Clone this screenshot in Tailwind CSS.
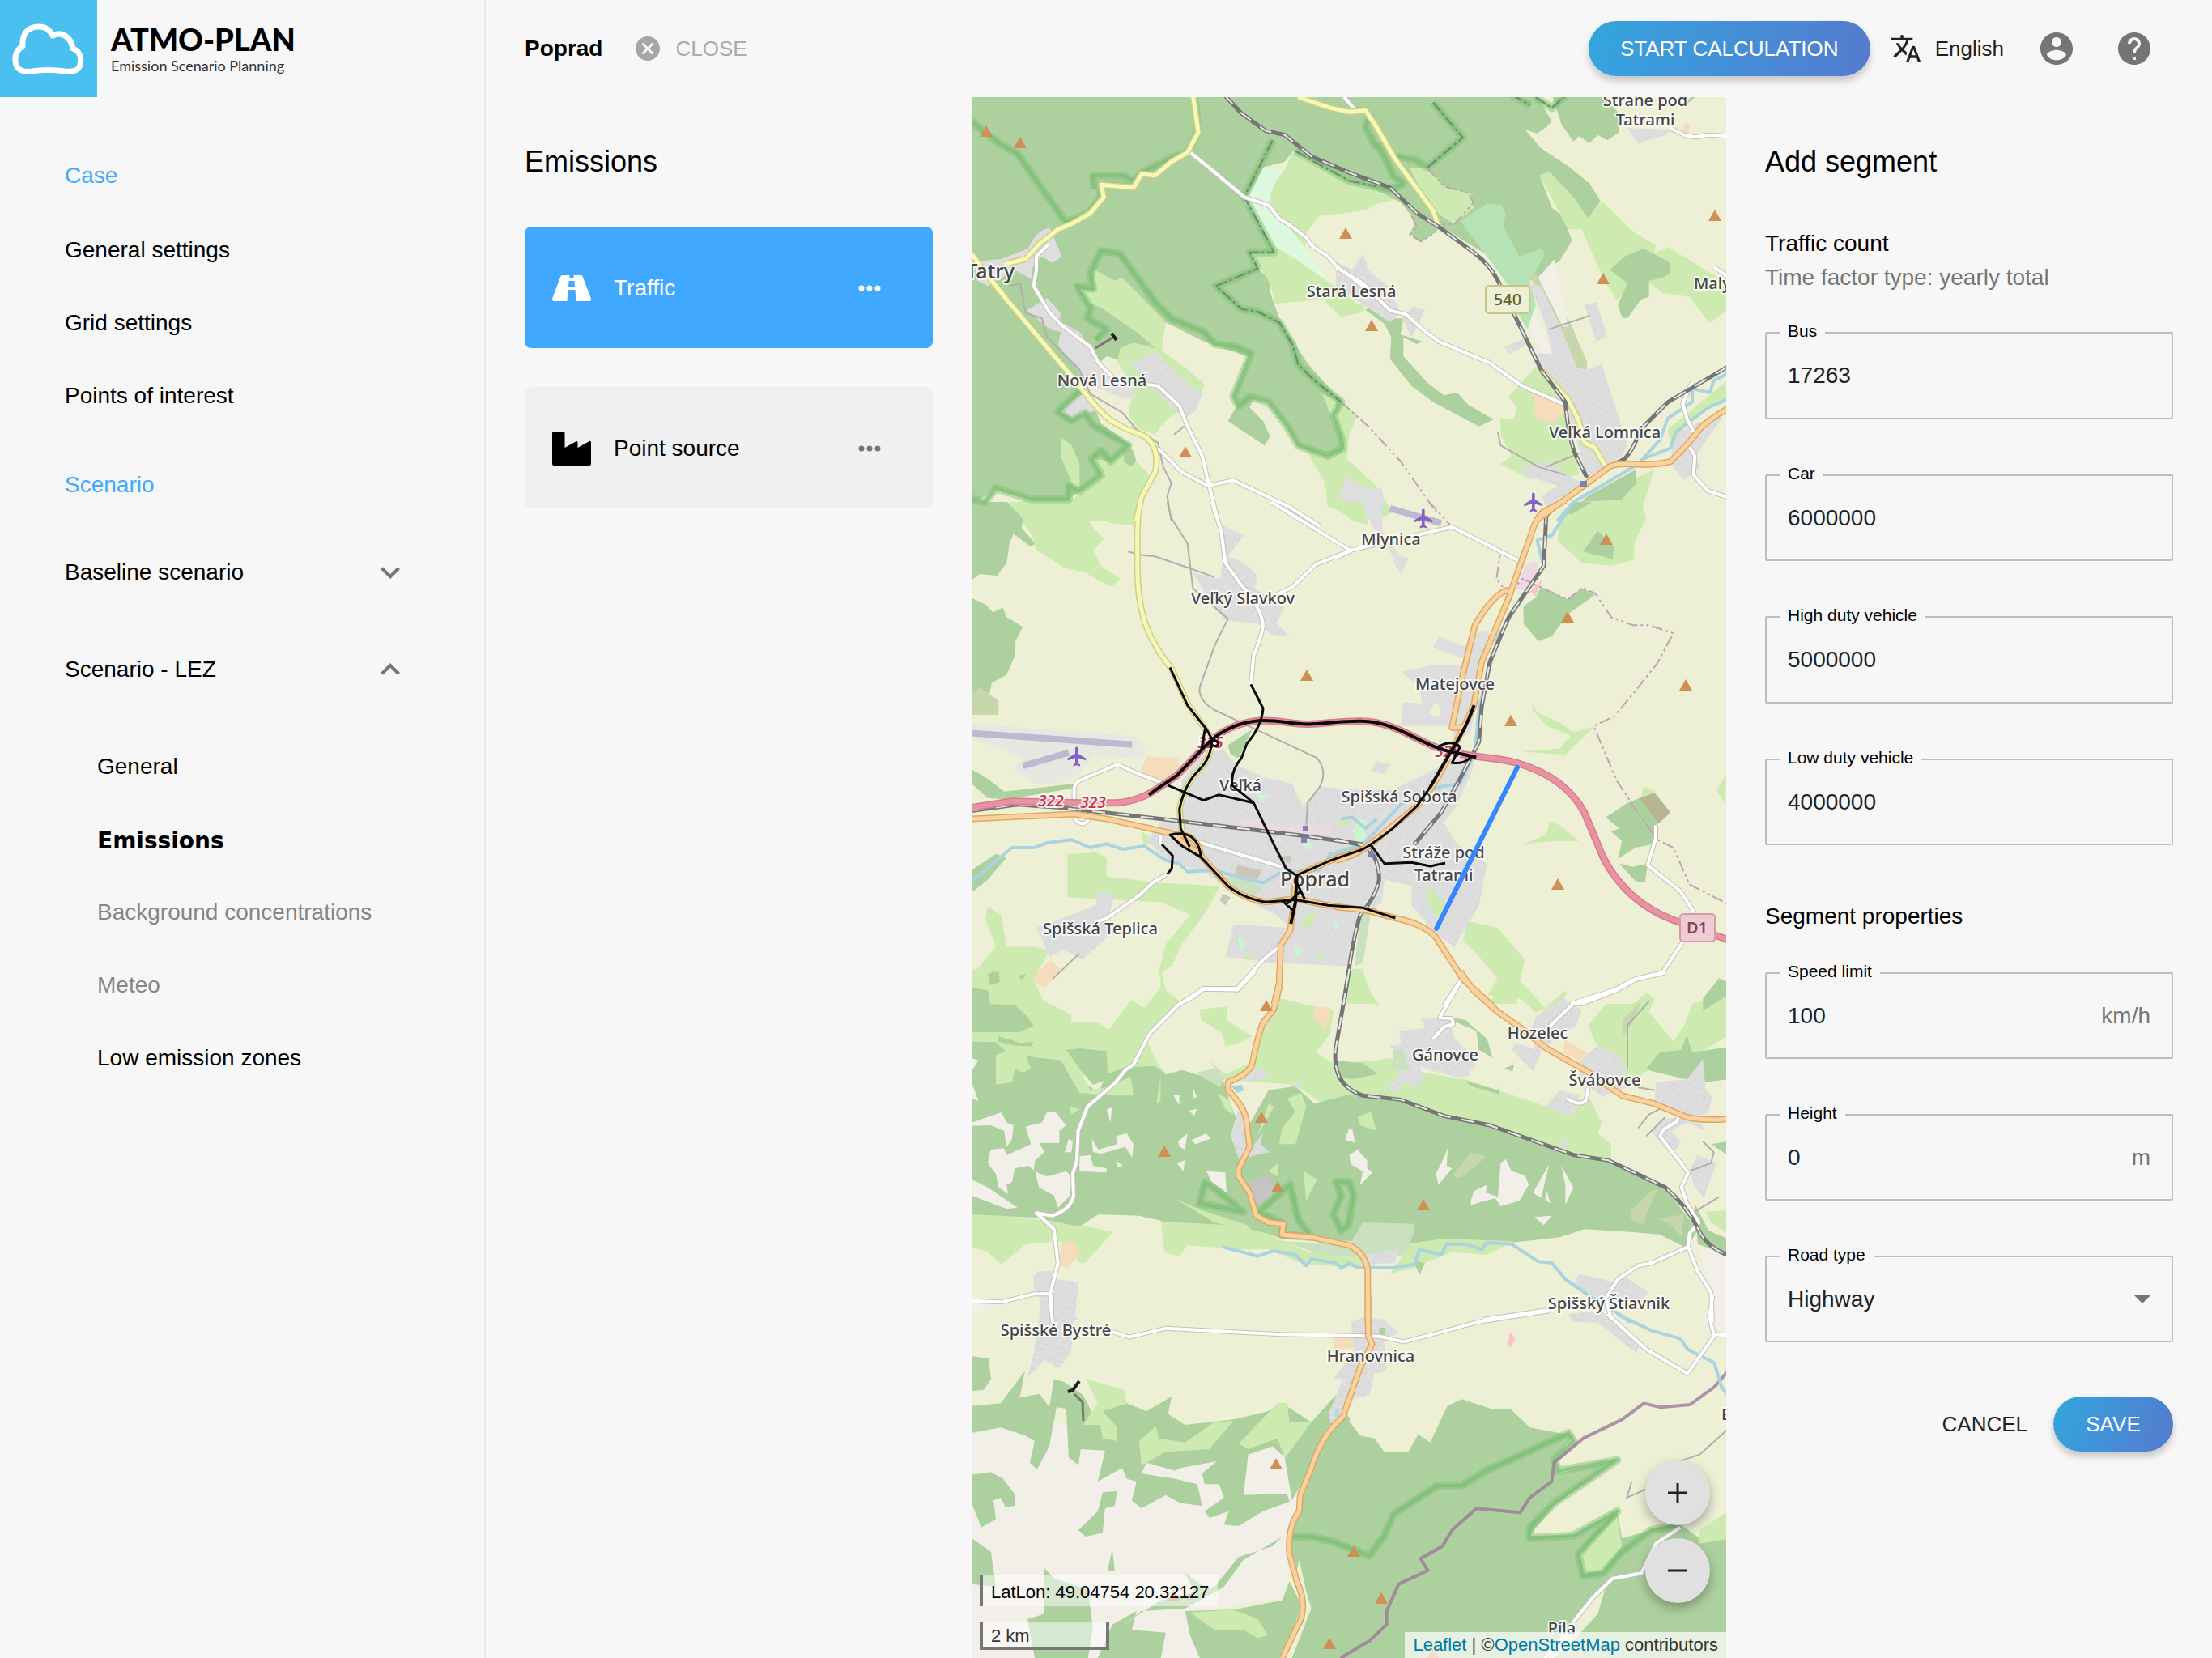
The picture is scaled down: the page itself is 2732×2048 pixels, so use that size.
<!DOCTYPE html>
<html lang="en">
<head>
<meta charset="utf-8">
<title>ATMO-PLAN – Add segment</title>
<meta name="viewport" content="width=device-width, initial-scale=1">
<script src="https://cdn.jsdelivr.net/npm/@tailwindcss/browser@4"></script>
</head>
<body class="grid min-h-screen grid-cols-[600px_600px_minmax(0,1fr)_600px] grid-rows-[120px_1fr] bg-[#f7f7f7] font-['Liberation_Sans',Arial,sans-serif] text-[28px] leading-[32px] text-black">

<!-- Sidebar -->
<aside class="row-span-2 border-r-2 border-[#e8e8e8]">
  <a href="#" class="flex h-[120px] items-center gap-[17px]">
    <svg class="size-[120px] shrink-0 bg-[#49c0f0]" viewBox="0 0 120 120" aria-hidden="true">
      <path d="M28 57C27 42 34 33 48 33C57 33 62 38 65 44C76 38 88 46 90 60C99 63 101 72 99 80C97 88 88 89 80 88C68 86 50 86 40 88C28 90 20 86 19 76C18 66 23 60 28 57Z" fill="none" stroke="#fff" stroke-width="7" stroke-linejoin="round"/>
    </svg>
    <span class="flex flex-col pt-[4px] font-['Lato',sans-serif]">
      <span class="text-[38px] font-black leading-[38px]">ATMO-PLAN</span>
      <span class="text-[18px] leading-[28px] text-[#333]">Emission Scenario Planning</span>
    </span>
  </a>
  <nav class="flex flex-col pt-[50px] pr-[92px] pl-[80px]">
    <h2 class="flex h-[94px] items-center text-[#40a9ff]">Case</h2>
    <a href="#" class="flex h-[90px] items-center">General settings</a>
    <a href="#" class="flex h-[90px] items-center">Grid settings</a>
    <a href="#" class="flex h-[90px] items-center">Points of interest</a>
    <h2 class="mt-[17px] flex h-[96px] items-center text-[#40a9ff]">Scenario</h2>
    <button type="button" class="flex h-[120px] items-center justify-between">Baseline scenario
      <svg class="size-[48px] fill-[#757575]" viewBox="0 0 24 24"><path d="M16.59 8.59 12 13.17 7.41 8.59 6 10l6 6 6-6z"/></svg>
    </button>
    <button type="button" class="flex h-[120px] items-center justify-between">Scenario - LEZ
      <svg class="size-[48px] fill-[#757575]" viewBox="0 0 24 24"><path d="m12 8-6 6 1.41 1.41L12 10.83l4.59 4.58L18 14z"/></svg>
    </button>
    <div class="mt-[15px] flex flex-col pl-[40px]">
      <a href="#" class="flex h-[90px] items-center">General</a>
      <a href="#" class="flex h-[90px] items-center pt-[4px] font-['DejaVu_Sans',sans-serif] font-bold">Emissions</a>
      <a href="#" class="flex h-[90px] items-center whitespace-nowrap text-[#868686]">Background concentrations</a>
      <a href="#" class="flex h-[90px] items-center text-[#868686]">Meteo</a>
      <a href="#" class="flex h-[90px] items-center">Low emission zones</a>
    </div>
  </nav>
</aside>

<!-- Top bar -->
<header class="col-span-3 flex items-center pr-[72px] pl-[48px]">
  <h1 class="font-bold">Poprad</h1>
  <button type="button" class="ml-[38px] flex items-center gap-[16px] text-[26px] text-[#ababab]">
    <svg class="size-[36px] fill-[#a6a6a6]" viewBox="0 0 24 24"><path d="M12 2C6.47 2 2 6.47 2 12s4.47 10 10 10 10-4.47 10-10S17.53 2 12 2zm5 13.59L15.59 17 12 13.41 8.41 17 7 15.59 10.59 12 7 8.41 8.41 7 12 10.59 15.59 7 17 8.41 13.41 12 17 15.59z"/></svg>
    CLOSE
  </button>
  <button type="button" class="ml-auto h-[68px] w-[348px] rounded-full bg-linear-[100deg] from-[#33a6de] to-[#557ace] text-[26px] whitespace-nowrap text-white shadow-[0_6px_10px_rgba(0,0,0,0.2)]">START CALCULATION</button>
  <button type="button" class="ml-[24px] flex items-center gap-[16px] text-[26px] text-[#212121]">
    <svg class="size-[40px] fill-[#212121]" viewBox="0 0 24 24"><path d="m12.87 15.07-2.54-2.51.03-.03A17.52 17.52 0 0 0 14.07 6H17V4h-7V2H8v2H1v2h11.17C11.5 7.92 10.44 9.75 9 11.35 8.07 10.32 7.3 9.19 6.69 8h-2c.73 1.63 1.73 3.17 2.98 4.56l-5.09 5.02L4 19l5-5 3.11 3.11.76-2.04zM18.5 10h-2L12 22h2l1.12-3h4.75L21 22h2l-4.5-12zm-2.62 7 1.62-4.33L19.12 17h-3.24z"/></svg>
    English
  </button>
  <button type="button" aria-label="Account" class="ml-[41px]"><svg class="size-[48px] fill-[#757575]" viewBox="0 0 24 24"><path d="M12 2C6.48 2 2 6.48 2 12s4.48 10 10 10 10-4.48 10-10S17.52 2 12 2zm0 3c1.66 0 3 1.34 3 3s-1.34 3-3 3-3-1.34-3-3 1.34-3 3-3zm0 14.2a7.2 7.2 0 0 1-6-3.22c.03-1.99 4-3.08 6-3.08 1.99 0 5.97 1.09 6 3.08a7.2 7.2 0 0 1-6 3.22z"/></svg></button>
  <button type="button" aria-label="Help" class="ml-[48px]"><svg class="size-[48px] fill-[#757575]" viewBox="0 0 24 24"><path d="M12 2C6.48 2 2 6.48 2 12s4.48 10 10 10 10-4.48 10-10S17.52 2 12 2zm1 17h-2v-2h2v2zm2.07-7.75-.9.92C13.45 12.9 13 13.5 13 15h-2v-.5c0-1.1.45-2.1 1.17-2.83l1.24-1.26c.37-.36.59-.86.59-1.41 0-1.1-.9-2-2-2s-2 .9-2 2H8c0-2.21 1.79-4 4-4s4 1.79 4 4c0 .88-.36 1.68-.93 2.25z"/></svg></button>
</header>

<!-- Emission categories -->
<section class="px-[48px] pt-[60px]">
  <h2 class="text-[36px] leading-[40px]">Emissions</h2>
  <ul class="mt-[60px] flex flex-col gap-[48px]">
    <li class="flex h-[150px] items-center rounded-[8px] bg-[#40a9ff] pt-[2px] pr-[60px] pl-[34px] text-white">
      <svg class="h-[32px] w-[48px] fill-white" viewBox="0 0 48 32"><path d="M13 0H35C36.500 0 37.300.6 37.800 2L47.800 28.500C48.400 30.500 47.500 32 45.500 32H2.500C.5 32-.4 30.500.2 28.500L10.200 2C10.700.6 11.500 0 13 0Z"/><path d="M21.500 0H26.500L26.800 4H21.200ZM20.600 7H27.400L28 14H20ZM19.600 18H28.400L29.600 32H18.400Z" fill="#40a9ff"/></svg>
      <a href="#" class="ml-[28px] grow">Traffic</a>
      <button type="button" aria-label="Traffic options"><svg class="size-[36px] fill-white" viewBox="0 0 36 36"><circle cx="8" cy="18" r="3.500"/><circle cx="18" cy="18" r="3.500"/><circle cx="28" cy="18" r="3.500"/></svg></button>
    </li>
    <li class="flex h-[150px] items-center rounded-[8px] bg-[#f0f0f0] pt-[2px] pr-[60px] pl-[34px]">
      <svg class="h-[42px] w-[48px]" viewBox="0 0 48 42"><path d="M2 0H13.500a2 2 0 0 1 2 2V20L29.500 12.200a1.500 1.500 0 0 1 2 1.300V20L45.500 12.200a1.500 1.500 0 0 1 2.500 1.300V40a2 2 0 0 1-2 2H2a2 2 0 0 1-2-2V2A2 2 0 0 1 2 0z"/></svg>
      <a href="#" class="ml-[28px] grow">Point source</a>
      <button type="button" aria-label="Point source options"><svg class="size-[36px] fill-[#757575]" viewBox="0 0 36 36"><circle cx="8" cy="18" r="3.500"/><circle cx="18" cy="18" r="3.500"/><circle cx="28" cy="18" r="3.500"/></svg></button>
    </li>
  </ul>
</section>

<!-- Map -->
<main class="relative overflow-hidden bg-[#edf0d5]">
<svg class="absolute inset-0 size-full [&_path]:[vector-effect:non-scaling-stroke]" viewBox="1200 120 932 1928" preserveAspectRatio="xMidYMid slice" role="img" aria-label="Map of Poprad and surroundings">
<defs>
  <pattern id="streets" width="46" height="46" patternUnits="userSpaceOnUse" patternTransform="rotate(24)"><rect width="46" height="46" fill="#dedede"/><path d="M0 10H46M14 0V46M30 10V46M14 30H46" stroke="#cbcbcb" stroke-width="1" fill="none"/></pattern>
  <path id="peak" d="M0-7L8 7H-8Z" fill="#d08f55"/>
  <path id="plane" d="M21 16v-2l-8-5V3.500c0-.83-.67-1.500-1.500-1.500S10 2.670 10 3.500V9l-8 5v2l8-2.500V19l-2 1.500V22l3.500-1 3.500 1v-1.500L13 19v-5.500l8 2.500z" fill="#8461c4"/>
  <g id="white-roads" fill="none">
    <g transform="translate(1200 120) scale(.33333)"><path d="M810 205L860 245 980 345 1010 370 1100 400 1140 450 1180 475 1240 520 1260 550 1320 590 1350 625 1450 700"/><path d="M285 545L240 590V640L230 700 290 800 340 850 440 925 470 985 520 1035M650 1065L690 1070 770 1145 800 1220 855 1330 880 1440 910 1560"/><path d="M690 1300L780 1390 875 1440 970 1420 1180 1520 1290 1590M1380 0L1420 45"/></g>
    <g transform="translate(1650 120) scale(.33333)"><path d="M0 630L100 690 150 740 200 790 260 805 320 860 380 905 570 985 690 1070 850 1140"/><path d="M1240 115L1290 140 1330 148 1380 140 1460 145M1320 1055L1300 1100 1285 1135 1300 1190 1325 1240M1310 1295L1330 1330 1325 1400 1380 1460 1460 1485M1400 630L1460 670"/></g>
    <g transform="translate(1200 620) scale(.33333 .3954)"><path d="M890 0L925 90 940 190 1000 260Q1080 340 1080 390 1070 430 1045 480L1035 570M1110 0L1400 150M1130 290L1190 265 1275 195 1410 150"/><path d="M700 1040V1070M720 1165L670 1190 620 1230 500 1300 470 1310M730 885L620 850 540 820 400 870Q380 880 380 900V980Q385 1005 415 1005 430 1000 440 985M830 1060L1150 1140M1140 1390L1080 1430 985 1520 860 1520 770 1570"/></g>
    <g transform="translate(1650 620) scale(.33333 .3954)"><path d="M0 175L60 150 430 78 680 185M465 1490L400 1575M1185 1010V1050L1155 1135 1275 1215 1330 1285M1285 1375L1210 1470 1110 1490 1030 1525 870 1568"/></g>
    <g transform="translate(1200 1200) scale(.33333)"><path d="M1050 0L985 68 860 65 820 95 770 120 660 230 600 345 570 365 530 415 430 500 395 590 390 700 375 750 378 830Q370 880 300 905L240 895 305 955 320 1080 290 1200 300 1300M0 1220L110 1225 230 1195H290"/></g>
    <g transform="translate(1650 1200) scale(.33333)"><path d="M465 30L385 170 430 175 435 195 400 205 360 250M1220 5L1110 30 1040 70 910 120 880 118 790 205M855 470Q900 500 925 480L935 430M1270 535L1265 555 1215 585 1200 610 1305 745 1280 800 1300 860 1345 930 1310 970 1305 1020 1340 1110 1390 1190 1395 1300M1305 1020L1170 1080 1120 1090 1045 1140 1000 1210 1020 1290M545 1290L780 1255"/></g>
    <g transform="translate(1200 1600) scale(.5995 .33333)"><path d="M290 135L325 155 400 122 480 130 640 145 800 150 840 152 890 172 960 140 1040 100 1190 58M1310 70L1390 200 1475 290 1530 150 1520 80 1527 0M1530 145L1560 148M165 0V80M1460 860L1410 920 1380 1030 1320 1050 1280 1120 1240 1210M1210 1300L1180 1344"/></g>
  </g>
  <g id="yellow-roads" fill="none">
    <g transform="translate(1200 120) scale(.33333)"><path d="M0 580L50 650 130 750 400 1070Q460 1150 500 1185T640 1255Q700 1300 680 1390L630 1480 610 1570M1210 0L1330 40 1400 55 1460 50 1500 110 1570 230 1710 420 1730 480"/><path d="M820-10L840 130 800 205 740 240 680 290 630 285 600 335 480 325 490 370 440 430 370 470 320 490 250 545 200 600 120 620"/></g>
    <g transform="translate(1650 120) scale(.33333)"><path d="M760 1010L860 1120 900 1200 920 1280 960 1300 1000 1370"/></g>
    <g transform="translate(1200 620) scale(.33333 .3954)"><path d="M625 0Q610 60 615 170 610 290 640 370 665 440 740 520L800 630 890 740Q890 800 840 840T770 960L780 1030 810 1080"/></g>
  </g>
  <g id="orange-roads" fill="none">
    <g transform="translate(1650 120) scale(.33333)"><path d="M1460 1150Q1370 1200 1340 1240T1240 1350Q1180 1365 1100 1360T1000 1380L740 1570"/></g>
    <g transform="translate(1650 620) scale(.33333 .3954)"><path d="M850-5L770 30Q740 50 720 110L690 180 640 300 540 500 510 640 440 760Q360 900 300 950L120 1075Q60 1110 0 1120M640 275Q590 280 515 385L470 540 430 705H480"/><path d="M0 1265L110 1275 220 1300Q330 1320 370 1360L470 1490 580 1575"/></g>
    <g transform="translate(1200 620) scale(.33333 .3954)"><path d="M0 990L380 975 500 990 740 1035 850 1105 950 1200Q1010 1240 1090 1250L1200 1240 1320 1260 1500 1280M740 1040Q840 1030 850 1105"/><path d="M1200 1170L1195 1250 1180 1340 1145 1385 1140 1500 1120 1570M1210 1165L1330 1120 1450 1085 1500 1055"/></g>
    <g transform="translate(1200 1200) scale(.33333)"><path d="M1140 0V60L1120 140 1080 190Q1060 240 1040 340 1030 380 950 410V440Q1020 510 1020 570L1030 650 990 730V760L1030 820 1055 905 1100 930 1155 935 1150 975 1260 985 1400 1015Q1460 1045 1468 1110V1300"/></g>
    <g transform="translate(1650 1200) scale(.33333)"><path d="M460 0L510 70 600 150 700 220 780 285 930 370 1060 460 1180 490 1300 540Q1370 555 1460 545"/></g>
    <g transform="translate(1200 1600) scale(.5995 .33333)"><path d="M817 0V150L825 180 800 270 765 450Q720 520 700 640L677 740 675 800Q650 860 655 960L670 1060Q695 1160 670 1230L640 1344"/></g>
  </g>
  <g id="motorway" fill="none">
    <g transform="translate(1200 620) scale(.33333 .3954)"><path d="M0 955L150 935 400 940H540Q620 935 690 895L760 855 880 750Q960 690 1070 683C1140 680 1190 696 1250 694S1400 682 1450 685C1580 690 1650 750 1750 775 1850 800 1930 795 2020 815Q2200 860 2270 970L2340 1110Q2430 1260 2630 1315L2810 1370"/></g>
  </g>
  <g id="railways" fill="none">
    <g transform="translate(1200 120) scale(.33333)"><path d="M935-10L1000 60 1090 125 1160 140 1260 220 1400 280 1550 335 1650 430 1730 480 1860 575Q1920 620 1950 680L2110 1010 2200 1130Q2210 1260 2240 1330L2280 1410"/><path d="M2800 1000L2580 1130 2480 1230Q2450 1310 2420 1340L2350 1375 2150 1530 2120 1560"/></g>
    <g transform="translate(1650 620) scale(.33333 .3954)"><path d="M780 30L770 200 640 360 570 500 540 640 530 750 450 880 390 970 290 1070M0 1055L110 1075Q160 1110 160 1180 150 1230 90 1290 60 1370 30 1568"/></g>
    <g transform="translate(1200 620) scale(.33333 .3954)"><path d="M0 965L170 945 330 955 700 990 1000 1020 1250 1045 1450 1070"/></g>
    <g transform="translate(1650 1200) scale(.33333)"><path d="M50-10L0 280Q-20 420 100 460L240 475 400 535 570 570 880 680 1010 700 1220 800Q1300 870 1340 950 1370 1020 1450 1050"/></g>
  </g>
  <g id="park-edges" fill="none">
    <g transform="translate(1200 120) scale(.33333)"><path d="M0 90L100 170 170 210 350 465M455 340L450 290 560 290 600 310 640 275 740 225 800 205 840 130 825 0M350 465L430 430 480 370 475 325 600 330"/><path d="M1115 160L1080 230 1010 370 1060 460 1120 575H1030L1060 635 905 700 1000 785 1060 795 1140 835 1190 920 1210 990 1270 1050 1370 1130 1340 1180 1370 1260 1375 1300 1320 1330 1210 1290 1170 1220 1100 1130 1030 1110 990 1145 970 1110 1035 950 980 925 900 915 860 870 740 820 680 760 550 580 480 570 440 650 450 710 390 700 440 780 430 820 500 860 460 900M400 1090L320 1165 370 1200 420 1170 450 1215 580 1290 515 1350 480 1310 445 1340 480 1400 400 1460 360 1440V1490H220L90 1450 50 1500 0 1490"/><path d="M1500 170L1540 240 1560 290 1600 320 1550 345 1400 310 1200 200M1480 60L1460 110 1500 190M1570 220L1640 230 1690 260 1820 150 1710 20M2000-10L2070 30M2090 0L2150 40 2200-5"/></g>
    <g transform="translate(1200 1200) scale(.33333)"><path d="M865 780L845 860 1005 890 920 820ZM1065 890L1180 790 1210 920 1260 985 1150 975 1155 935ZM1350 780H1400L1415 830 1395 940 1370 960 1340 900 1370 830Z"/></g>
    <g transform="translate(1200 1600) scale(.5995 .33333)"><path d="M650 895H700L740 910 820 965 850 890 870 810 960 705H1010L1060 650 1110 610 1230 510 1240 540 1200 610 1210 650 1330 610 1290 660 1200 770 1150 860V900L1240 890 1330 800 1300 860 1250 960 1260 1040 1300 1030 1340 950 1400 870 1460 850"/></g>
  </g>
</defs>

<!-- land cover -->
<g transform="translate(1200 120) scale(.33333)">
  <path fill="#add19e" d="M-20-20H2080L2110 20 2150 90 2130 110 2095 135 2050 120 2110 190 2210 255 2290 320 2330 385 2285 450 2220 380 2140 275 2105 290 2150 410 2190 440 2225 530 2180 605 2080 680 2000 640 1870 560 1740 480 1700 515 1665 535 1625 505 1645 460 1590 390 1500 345 1400 300 1190 200 1160 240 1080 260 1030 370 1120 570 1030 580 1060 640 1110 670 1105 720 1140 820 1240 980 1370 1130 1340 1180 1370 1260 1375 1310 1320 1335 1210 1290 1170 1220 1100 1130 1050 1110 1030 1150 1080 1200 1105 1260 1085 1290 950 1200 985 1140 970 1110 1035 965 860 905 720 840 680 930 640 960 600 990 500 960 400 1060 455 1150 480 1210 590 1290 515 1350 445 1340 480 1400 400 1460 360 1490H220L90 1450 0 1510Z"/>
  <path fill="#cdebb0" d="M455 640L530 680 560 670 720 835 705 930 860 1060 870 1090 840 1110 720 1200 680 1250 620 1230 580 1180 600 1080 540 980 550 930 600 910 680 930 610 870 480 780 430 760 400 710 450 720ZM1190 200L1240 240 1400 300 1570 380 1500 395 1460 420 1290 440 1240 500 1230 620 1330 690 1460 790 1370 815 1300 750 1125 765 1105 690 1040 580 1120 580 1080 430 1110 330 1160 270ZM590 1290L610 1350 660 1400 600 1570H130V1510L220 1490 360 1495 400 1470 490 1400 450 1340 520 1350ZM330 1260L370 1290 400 1360 400 1440 380 1450 330 1330ZM1300 1100L1370 1130 1430 1180 1400 1250 1390 1340 1500 1440 1560 1540 1500 1570 1320 1520 1310 1430 1240 1310 1340 1320 1370 1280Z"/>
  <path fill="#ddf9e0" d="M1080 260L1150 265 1110 350 1105 400 1240 560 1330 690 1200 600 1120 550 1010 390Z"/>
  <path fill="#edf0d5" d="M720 835L860 905 1015 970 970 1110 950 1200 1085 1290 870 1250 690 1220 760 1200 840 1110 870 1060 705 940Z"/>
  <path fill="#add19e" d="M560 1290L600 1310 610 1350 590 1370 565 1350ZM1030 1110L1000 1150 950 1200 1085 1290 1105 1255 1080 1200 1025 1160Z"/>
</g>
<g transform="translate(1650 120) scale(.33333)">
  <path fill="#add19e" d="M800-10H1340L1320 10 1300 25 1040 40 1050 130 1005 160 970 140 940 170 900 145 880 165 835 100Z"/>
  <path fill="#edf0d5" d="M980-10H1320L1300 20 1040 50Z"/>
  <path fill="#cdebb0" d="M270 260L340 262 400 330 500 360 510 410 440 470 390 440 340 390ZM755 290L790 275 880 370 935 450 985 385 1090 490 1185 550 1180 580 1230 555 1450 690V790L1385 838 1310 740 1210 725 1160 690 1040 750 1000 690 910 490 860 490ZM755 985L640 1110 670 1150 660 1190 610 1190V1250L650 1330 610 1360 720 1415 900 1400 860 1140ZM1450 1050L1330 1150 1230 1230 1240 1290 1330 1180 1450 1120ZM860 1570L960 1480 1180 1380 1120 1570ZM0 760L110 770 90 800 20 810Z"/>
  <path fill="#b5e3b5" d="M460 460L560 395 610 400 630 430 620 480 680 590 760 560 775 580 720 680 740 770 710 860 660 780 640 700 560 590Z"/>
  <path fill="#add19e" d="M1015 640L1070 590 1140 560 1240 615V650L1210 670 1160 680V740L1130 750 1080 820 1060 815 1045 770 1080 690ZM110 790L130 770 180 820 250 820 240 880 320 905 300 915 250 890 250 960 340 1060 400 1105 450 1095 490 1140 585 1195 530 1220 360 1130 280 1070 200 970 205 890 180 840ZM0 1100L20 1120 0 1150ZM0 1220L20 1250 25 1310 0 1325ZM860 1550L930 1480 1110 1380 1115 1430 1050 1500 1010 1500Z"/>
  <path fill="#c8d7ab" d="M715 655L750 660 820 770 870 840 930 980 935 1100 915 1090 860 960 840 880 770 770Z"/>
  <path fill="#f2efe9" d="M740 790L800 950 770 955 715 860ZM750 670L810 600 860 850 840 850Z"/>
  <path fill="#f5dcba" d="M730 1100L850 1145 845 1170 800 1210 740 1185ZM1290 100H1315L1305 135 1285 130Z"/>
  <path fill="url(#streets)" d="M920 770L965 760 1005 885 965 905ZM715 690L760 700 840 870 930 1100 870 1080 880 1000 930 1010 985 990 1080 1290 1060 1330 930 1410 870 1200 760 1010 740 950 800 950 780 850ZM625 925L700 895 720 910 640 955ZM245 820L285 775 330 790 280 890ZM0 610L60 640 100 580 120 640 190 700 240 800 200 835 0 700ZM1080 115L1240 120 1220 140 1120 170ZM690 1370L780 1350 910 1430 780 1520 760 1480 820 1440 700 1400ZM1250 1250L1400 1180 1430 1190 1330 1330 1350 1370 1290 1420 1240 1360Z"/>
  <path fill="#dedede" d="M10 1480L40 1405 110 1450 170 1450 180 1500 130 1570 110 1560 60 1520Z"/>
</g>
<g transform="translate(1200 120) scale(.33333)"><path fill="#dedede" d="M210 560Q240 490 290 485L335 590 300 615 260 590 220 640 230 680 160 640 60 700 20 680 10 610 110 600ZM205 790L280 745 330 800 325 830 400 870 440 930 500 1010 600 1080V1120L560 1115 430 1060 370 980 320 920 330 870 290 860ZM330 1170L360 1130 430 1090 460 1160 380 1190Z"/><path fill="url(#streets)" d="M590 990L680 945 780 1040 855 1100 830 1160 790 1195 750 1160 650 1060Z"/></g>

<g transform="translate(1200 620) scale(.33333 .3954)">
  <path fill="#cdebb0" d="M130 0L490 5 425 40 450 80 490 115 450 150 480 200 550 240 520 265 470 245 420 220 340 205 240 150 220 100 185 60ZM490 0H605V75L510 65ZM355 1100L460 1095 500 1110V1170L700 1190 920 1200 870 1280 780 1380 740 1450 690 1480 720 1380 810 1290 700 1250 355 1235ZM60 1265L110 1290 130 1390H230L290 1400 230 1490 270 1568H0V1480L40 1440 90 1390 50 1300ZM630 1030L680 1060 640 1080ZM1310 0H1370L1470 70 1420 60Z"/>
  <path fill="#add19e" d="M-10 0H130L190 50 185 80 235 130 220 140 155 100 140 130 130 190 95 230 30 225 0 245ZM0 300L50 320 80 345 115 330 130 360 190 390 160 440V480L130 540 75 565 60 620 0 600ZM0 835L60 865 120 905 380 880 370 895 130 930 60 925 0 880ZM0 1150L90 1100 130 1110 60 1180 0 1220ZM60 1480L80 1465 110 1490 90 1510ZM170 1480L200 1475 190 1495ZM0 1540L50 1560V1568H0Z"/>
  <path fill="#c8d7ab" d="M0 600L30 580 100 620V665H0Z"/>
  <path fill="#e9e7e2" d="M0 693L610 732 645 775 630 802 450 795 400 850 310 885 230 880 155 835 190 800 0 740Z"/>
  <path fill="#f5dcba" d="M625 845L650 795 765 800 770 850 720 875ZM290 1430L330 1460 280 1510 225 1490Z"/>
  <path fill="url(#streets)" d="M780 870L840 800 930 770 980 820 1080 860 1190 880 1200 910 1230 950 1290 890 1440 900 1560 900 1800 800 1870 790 1850 850 1790 960 1750 1000 1800 1070 1910 1130 1880 1260 1790 1390 1720 1350 1630 1260 1630 1200 1530 1180 1520 1250 1440 1300 1390 1450 1120 1440 940 1420 970 1320 1180 1330 1130 1290 1010 1240 850 1150 740 1130 650 1060 700 1000 770 990ZM820 220L920 240 930 190 920 70 1010 105 950 170 1010 190 1060 230 1050 270 1160 330 1130 380 1180 420 1110 415 1060 380 940 370 880 310ZM240 1330L460 1260 470 1215 530 1230 510 1290 530 1340 410 1430 340 1400 290 1420Z"/>
  <path fill="#add19e" d="M950 760L1040 710 990 800 960 790Z"/>
  <path fill="#c9e1bf" d="M910 1180L1000 1170 1080 1210 1050 1230 960 1200ZM1440 1290L1480 1280 1450 1440 1420 1450Z"/>
  <path fill="#c9c7b9" d="M985 1135L1075 1150 1060 1180 975 1165ZM930 1225L960 1235 940 1260 920 1245ZM1150 1105H1185L1180 1130 1155 1125Z"/>
  <path fill="#ecd9e6" d="M960 1000L1050 990 1150 1020 1230 1005 1340 1015 1330 1040 1150 1035Z"/>
  <path fill="#ccf4d2" d="M1410 1030L1440 985 1465 1000 1460 1050 1430 1065ZM1050 910L1100 915 1080 940ZM1230 1060L1270 1070 1240 1090ZM985 1360L1020 1370 1000 1410ZM1200 1380L1230 1400 1200 1425ZM1340 1310L1360 1320 1345 1345Z"/>
  <path fill="#cdebb0" d="M1250 1280L1280 1290 1240 1340 1220 1320ZM1010 1410L1040 1420 1020 1435ZM1270 1410L1310 1415 1290 1435ZM1350 1000L1410 990 1380 1015Z"/>
  <path fill="none" stroke="#bbbad0" stroke-width="8" d="M0 722L595 758M190 825L360 783"/>
</g>
<g transform="translate(1650 620) scale(.33333 .3954)">
  <path fill="#cdebb0" d="M890 0L1130-10 1150 50 1105 130V180L1020 200 910 190 820 120 830 60ZM725 630L750 660 830 690 880 720 960 700 850 790 690 780 830 770 870 730 780 700 730 650ZM690 1070L780 1040 790 1000 830 1010 900 1060 800 1060ZM1450 850L1410 900 1440 940ZM490 1310L600 1330 700 1430 680 1500 670 1568H570L610 1500 530 1420 470 1370ZM340 1200L410 1260 380 1310 340 1250ZM50 1470L100 1480 150 1568H40ZM0 0H100L120 70 60 60Z"/>
  <path fill="#add19e" d="M970 90L1030 140 1025 178 915 155ZM760 265L860 305 910 268 960 290 860 350 800 420 750 435 695 380V325L740 300ZM1140 920L1190 1000 1170 1070 1110 1080 1045 1115 1060 1060 1020 1030 1050 1020 1000 985 1080 940ZM1050 1130L1100 1140 1155 1130 1145 1188 1110 1185ZM850 30L880 0H950L870 40ZM1370 1540L1420 1488 1450 1500V1568H1360Z"/>
  <path fill="#b5b591" d="M1125 925L1180 908 1240 970 1195 1005Z"/>
  <path fill="#cdebb0" d="M1140 890L1185 905 1130 925Z"/>
  <path fill="#dedede" d="M120 0L170 0 175 100 240 170 270 175 240 225 220 200 200 150 130 70ZM380 420L470 450 540 400 570 410 540 500 500 720 440 750 430 700 330 700 240 700 250 625 320 630 310 580 240 530 360 510 460 510 480 490 360 455ZM130 840L150 810 200 820 180 850Z"/>
  <path fill="#edf0d5" d="M345 660L365 625 390 640 380 675Z"/>
  <path fill="#ecd9e6" d="M700 200L740 185 760 220 700 280 670 270Z"/><path fill="#ffc0cb" d="M720 280L765 240 740 295Z"/>
  <path fill="none" stroke="#bbbad0" stroke-width="8" d="M200 20L390 66"/>
</g>
<g transform="translate(1200 1200) scale(.33333)">
  <path fill="#cdebb0" d="M0-10L230 60 270 110 370 160V190H470L510 215 590 105 640 135 700 60V-10L720 70 770 110 650 260 690 340 720 380 0 400ZM1140 100L1270 130 1340 140 1330 230 1275 300 1340 340 1500 330V480L1300 490 1200 420 930 400 880 330 940 380 1030 340 1060 250 1090 180ZM845 140L950 130 945 180 1040 240 1000 260 940 280 930 230 850 180ZM0 890L400 940 525 965 420 1080H400L330 1000 200 1010 110 1085 60 1040 0 1020ZM700 920L950 940 1090 970 1250 1040 1500 1060 1490 1100 1230 1085 1100 1030 1000 1030 800 1015 770 1055 715 1040Z"/>
  <path fill="#add19e" d="M0 60L60 70 70 120 160 125 200 160 230 200 180 225H0ZM0 260L90 262 130 300 250 320 340 330 400 400 470 450 500 380 570 355 680 350 720 382 780 365 860 390 930 400 970 520 1010 600 1100 440 1200 425 1270 490 1400 455 1500 470 1590 462 1730 530 1950 580 2230 680 2360 700 2570 800 2690 960 2650 1025 2550 975 2440 965 2270 955 2180 985 2000 1005 1750 990 1620 1010 1540 985 1400 1000 1260 985 1150 990 1090 970 950 940 720 928 620 905 470 900 400 945 230 912 0 900ZM350 290L400 285 500 295 505 400 450 420 400 360ZM100 240L180 265 230 260 220 278 160 275 100 260ZM60 10L100 0 105 40 70 50Z"/>
  <path fill="#cdebb0" d="M90 310L140 290 200 310 220 360 190 375 160 360 150 410 90 420ZM320 310L400 370 440 440 500 430 590 390 600 460 520 460 400 450ZM700 390V480L685 490ZM360 500L400 510 370 530ZM1170 470L1220 450 1240 500 1200 640H1140L1150 580 1200 520ZM1100 490L1120 500 1060 610ZM1430 540L1480 520 1500 590 1440 570ZM1230 740L1280 770 1240 850ZM1100 740L1135 710V760ZM750 840L840 880 1020 940 1040 960 900 930ZM910 450L960 480 970 530 940 510Z"/>
  <path fill="#c9e1bf" d="M830 375L900 360 940 390 920 430ZM1150 1000L1400 1010 1450 930 1640 935 1640 970 1620 1010 1740 1040 1500 1060 1300 1050Z"/>
  <path fill="#f2efe9" d="M0 560L110 522 130 560 155 570 150 620 130 650 120 590 70 570 0 572ZM200 575L260 560 280 520 310 520 350 570 325 590V635H250L270 670 235 700 230 740 280 760 350 740 370 760 365 830 320 875 305 830 250 800 235 740 210 720 160 730 150 780 130 790 135 825 100 800 90 750 60 710 70 660 120 655 130 680 220 640ZM0 770L60 800 170 875 130 880 0 830ZM345 670L360 620 375 630 370 670ZM400 685L440 680 450 720 500 730V745L400 740ZM445 620L470 660 540 640 535 610 575 600 600 640 595 690 570 650 480 675 450 670ZM500 510L520 505 515 560ZM745 455L770 460V495ZM820 430L835 465 820 470ZM805 515L835 510 825 535ZM765 630L800 600 790 660 770 650ZM815 625L870 600 885 620 830 640ZM760 710L790 700 785 740ZM870 740L940 745 945 820 890 780ZM535 700L560 720 540 725ZM1385 630L1410 580 1420 630ZM1400 680L1430 660 1465 700V730L1485 745 1440 790 1450 740 1405 715ZM0 320L25 330 0 370ZM0 410L25 480 0 470Z"/>
  <path fill="#c5c3c3" d="M1025 780L1100 750 1125 820 1060 870Z"/>
  <path fill="#f5dcba" d="M230 40L250 0H330L270 60ZM330 1005L375 1000 405 1040 355 1100 325 1090ZM1270 130L1330 135 1320 190 1300 220 1290 190 1270 180Z"/>
  <path fill="url(#streets)" d="M1020 390L1060 355 1095 370 1085 400 1000 405ZM960 610L990 500 1020 580 1040 650 1080 600 1070 640 1105 670 990 695ZM230 1130L250 1110 300 1110 310 1140 395 1150 385 1280 400 1290H255L250 1190 230 1170ZM1180 420L1220 410 1210 435Z"/>
  <path fill="#aad3df" d="M960 425L1000 420 1010 440 985 450Z"/>
</g>
<g transform="translate(1650 1200) scale(.33333)">
  <path fill="#cdebb0" d="M100 340L200 320 300 370 480 400 780 500 940 470 985 560 970 600 1020 640V700L900 690 600 580 380 530 240 475 60 450ZM935 200L1000 120 1100 120 1150 80 1180 100 1160 150 1250 260 1290 200 1320 120 1450 80V240L1300 330 1150 370 1090 420 960 260ZM560 90L620-10H680L670 20 780 140 740 150 670 90ZM780 130L850 70 855 85 800 140ZM50-10H100L120 70 165 130 110 110 50 70ZM280 1010L400 990 660 1000 560 1050 430 1040 280 1100 200 1120Z"/>
  <path fill="#add19e" d="M1150 360L1200 300 1280 290 1300 235 1320 300 1450 280V400L1370 410 1300 400 1170 370ZM1360 100L1420 30 1450 40V90L1360 145ZM0 330L100 340 155 380 60 400 10 390ZM400 165L480 180 560 250 580 320 530 290 520 220 450 190ZM480 405L600 440 605 410V455L500 425ZM620 360L660 345 655 370ZM1330 860L1380 960 1450 990V1050L1340 1010ZM285 1070L330 1080 310 1125ZM1390 640L1450 630V680Z"/>
  <path fill="#cdebb0" d="M1370 890L1450 885V970L1390 930Z"/>
  <path fill="#c8d7ab" d="M430 760L500 670 555 685 520 720 460 765ZM1090 890L1170 810 1190 810 1150 900 1140 940 1095 920ZM1195 915L1290 900 1280 980 1240 940ZM1060 180L1130 110 1110 170 1065 240Z"/>
  <path fill="#f2efe9" d="M35 620L50 580 70 635ZM55 680L80 660 115 700V730L135 745 90 790 100 740 60 715ZM370 750L400 690 415 655 410 720 430 730 380 790ZM500 850L510 815 560 790 555 820 600 835 610 710 630 695 650 740 700 755 715 790 680 850 610 870 590 840 500 865ZM730 820L790 715 760 840ZM835 720L880 800 850 865 850 790ZM780 810L795 860 775 845ZM735 910L800 905 770 940ZM1340 1020L1460 1050V1300H1395L1390 1190Z"/>
  <path fill="#f5dcba" d="M850 255L930 300 910 335 840 300ZM500 340L520 345 510 375Z"/>
  <path fill="url(#streets)" d="M200 275L240 270 235 220 330 210 315 175 420 175 440 250 520 320 490 390 440 390 360 370 310 350 325 400 290 430 250 410 220 450 185 435 240 380 215 360 210 290ZM650 290L670 265 740 290 720 220 740 170 840 95 910 145 890 200 800 260 760 300 730 370ZM905 330L970 275 1030 300 1070 340 1075 430 990 465 900 400ZM775 500L830 440 900 460 900 500 870 540ZM1185 410L1300 400 1360 325 1370 440 1395 460 1380 525 1300 545 1180 490ZM1170 590L1200 550 1270 540 1350 560 1370 590 1300 560 1240 590 1280 630 1260 660 1190 620ZM1310 740L1340 680 1410 710 1380 790 1365 840 1330 800ZM820 640L840 615 870 655ZM115 1050L230 1030 220 1080 120 1085ZM880 1160L900 1120 1030 1150 1070 1130 1160 1190 1130 1220 1030 1210 940 1210ZM860 1270L940 1260 1000 1300H880Z"/>
  <path fill="#c9e1bf" d="M210 290H250L270 370 215 360Z"/>
</g>
<g transform="translate(1200 1600) scale(.5995 .33333)">
  <path fill="#f2efe9" d="M0 480H560L640 560 680 660 675 800 655 860 660 960 640 1120 440 1180 500 1344H0ZM0 30L70 25 0 80ZM1500 100L1568 150V0H1530Z"/>
  <path fill="#add19e" d="M0 410L60 400 110 280 100 370 85 430 95 380 140 365 160 415 170 310 190 320 230 370 250 440 320 400 360 430 412 375 405 440 440 480 540 460 610 430 640 400 700 470 750 370 780 460 700 640 660 760 645 600 620 560 570 590 560 740 650 735 655 765 600 800 550 855 520 850 530 800 490 825 480 800 520 750 510 700 480 700 475 660 505 615 430 640 420 650 360 620 350 660 420 680 465 700 475 780 430 770 400 740 350 790 330 760 340 690 320 680 310 640 260 690 275 575 225 570 220 630 200 600 195 420 175 415 160 560 135 645 120 620 130 540 110 520 60 490 0 510ZM0 665L40 655 65 680 90 740V780L70 785 60 750 45 760 50 830 20 860 0 770ZM270 730L300 725 295 780 275 790 270 880 235 895 220 870 260 800ZM0 900L40 950 50 1080 0 1070ZM290 940L295 1020 280 1020ZM150 1010L170 1050 240 1090 250 1230 240 1344H130L115 1200 150 1180ZM640 895L560 980 520 1080 440 1160 350 1170 300 1240 330 1200 390 1130 440 1110 500 1080 550 970 620 930ZM440 1030L480 1080 470 1140ZM290 1220L340 1170 330 1240 400 1250 390 1344H260ZM440 1170L540 1165 640 1130 655 1060 680 1150 640 1344H470L450 1260ZM0 225L35 235 40 310 25 350 0 355Z"/>
  <path fill="#add19e" d="M775 460L800 520 830 530 850 580H900L920 515 945 545 980 410 1010 385 1070 420 1110 420 1150 490 1240 520 1200 610 1210 660 1330 610 1280 670 1200 780 1150 890 1240 890 1330 800 1340 900 1400 870 1460 850 1500 900 1568 900V1344H640L690 1150 655 960 660 850 700 640Z"/>
  <path fill="#cdebb0" d="M235 310L315 350 320 400 270 430 300 490V540L270 530 265 480 230 480 260 400ZM345 540L380 485 385 530 440 545 500 470 540 465 490 570 400 580 350 630ZM550 550L630 400 650 400 655 470 700 470 645 605 630 530 570 570ZM450 1175L540 1165 590 1200 610 1260 590 1270 560 1240 500 1240ZM1250 960L1330 820 1340 930 1300 1020 1260 1030ZM1500 870L1568 790V900L1500 920Z"/>
  <path fill="#edf0d5" d="M675 980L690 1100 700 1160 660 1344H645L680 1160 665 1060ZM1305 1090L1290 1180 1230 1300 1200 1344H1180L1280 1110Z"/>
  <path fill="#f5dcba" d="M745 155H795L790 195 745 200ZM1255 985L1268 990 1262 1030Z"/>
  <path fill="#ffc0cb" d="M1110 135L1120 160 1110 192 1104 180Z"/>
  <path fill="url(#streets)" d="M145 0H215L205 210 180 270 150 240 115 305 130 200ZM780 100L810 80 850 90 880 140 850 160 855 280 830 290 820 370 790 380 765 450 740 475 735 440 765 310 745 310 790 200 785 150ZM1230 70L1300 60 1375 190 1370 215 1290 100 1240 85Z"/>
  <path fill="#add19e" d="M840 120H853V145H840ZM1310 1085L1335 1065 1350 1100 1330 1120Z"/>
  <path fill="#add" d="M748 425H757V450H748Z"/>
</g>

<!-- park boundaries -->
<use href="#park-edges" stroke="#7cbd73" stroke-opacity=".45" stroke-width="10" stroke-linejoin="round"/>
<use href="#park-edges" stroke="#7cbd73" stroke-opacity=".7" stroke-width="4" stroke-linejoin="round"/>
<g fill="none" stroke="#6f8a6c" stroke-width="2" stroke-dasharray="14 4 3 4">
  <g transform="translate(1200 120) scale(.33333)"><path d="M1115 160L1080 230 1010 370 1060 460 1120 575H1030L1060 635 905 700 1000 785 1060 795 1140 835 1190 920 1210 990 1270 1050 1370 1130"/><path d="M1200 200L1270 240 1400 310 1500 330M1690 260L1820 150 1710 20M2000-10L2070 30M2090 0L2150 40 2200-5"/></g>
</g>
<g fill="none" stroke="#bea3b7" stroke-width="2" stroke-dasharray="14 4 3 4 3 4">
  <g transform="translate(1650 120) scale(.33333)"><path d="M20 1130L120 1220 240 1350 380 1550M280 440L300 480 275 510 315 535 370 500M340 265L400 330 490 355 510 390 440 470 380 475"/></g>
  <g transform="translate(1650 620) scale(.33333 .3954)"><path d="M345 0L430 78 610 155 595 240 640 290 690 240 860 305 910 268 960 285 1020 360 1100 385 1160 385 1250 410 1190 505 1100 600 1030 670 955 700 1040 870 1110 960 1190 1055 1250 1080 1310 1195 1450 1255"/></g>
</g>
<g fill="none" stroke="#9b7398" stroke-opacity=".75" stroke-width="4" stroke-linejoin="round"><g transform="translate(1200 1600) scale(.5995 .33333)"><path d="M1568 260L1530 340 1480 405 1420 415 1385 400 1340 460 1260 530 1200 620 1195 690 1150 750 1130 805 1040 790 990 870 970 930 925 975 940 1020 880 1070 855 1170 855 1220 820 1280 760 1344"/></g></g>

<!-- rivers -->
<g fill="none" stroke="#aad3df" stroke-width="4" stroke-linejoin="round">
  <g transform="translate(1200 620) scale(.33333 .3954)"><path d="M0 1185L150 1080 230 1080 280 1065 370 1055 440 1080 500 1068 560 1085 640 1075 720 1120 770 1130 800 1155 900 1150 1000 1175 1080 1190 1140 1160 1290 1150 1330 1100 1400 1100M1370 990L1410 985 1460 1020 1500 990"/></g>
  <g transform="translate(1650 120) scale(.33333)"><path d="M1460 1020L1400 1050 1385 1095 1320 1080 1320 1130 1230 1190 1200 1270 1120 1360 1000 1430 880 1500 820 1570M1460 1115L1380 1150 1260 1240 1240 1300 1140 1340"/></g>
  <g transform="translate(1650 620) scale(.33333 .3954)"><path d="M870 10L800 105 745 120 770 200 700 290 600 420 560 550 530 640 515 780 460 880 380 890 240 945 100 1070 0 1095"/></g>
  <g transform="translate(1200 1200) scale(.33333)"><path d="M930 1020L1060 1055 1120 1035 1200 1050 1240 1090 1260 1065 1350 1080 1370 1100 1400 1080 1430 1098H1560L1640 1085 1660 1030 1740 1050 1760 1010 1830 1010 1890 1030 1910 1005 2000 1010 2100 1075 2150 1080 2200 1140 2300 1210 2400 1270 2440 1300"/></g>
  <g transform="translate(1200 1600) scale(.5995 .33333)"><path d="M1330 70L1400 130 1460 160 1475 200 1530 250 1545 340 1560 375"/></g>
</g>

<!-- minor tracks and roads -->
<g fill="none" stroke="#b3aead" stroke-width="2">
  <g transform="translate(1200 120) scale(.33333)"><path d="M140 700L180 690 200 800 260 820 280 890 400 1010 440 1100 560 1170 610 1230 690 1280 710 1370 740 1430 725 1480 740 1570M750 1250L800 1210"/></g>
  <g transform="translate(1200 620) scale(.33333 .3954)"><path d="M725 0L740 50 800 130 820 270 950 365 900 450 845 580Q840 620 900 650L1280 800Q1320 840 1290 890L1245 940 1240 1010M580 155L620 165 680 170 800 205 900 235M300 1490L400 1410"/></g>
  <g transform="translate(1650 120) scale(.33333)"><path d="M600 1240L610 1290 750 1370 850 1400M900 1320L780 1370M790 860L940 810"/></g>
  <g transform="translate(1650 1200) scale(.33333)"><path d="M1330 890L1420 835M1310 740L1390 710 1400 670 1360 630M1120 430L1180 440M1120 580L1160 530 1220 500M1150 610L1220 540M1080 360L1080 200 1160 110"/></g>
  <g transform="translate(1200 1600) scale(.5995 .33333)"><path d="M1568 480L1500 590 1450 620M1360 690L1350 750 1400 710"/></g>
</g>
<use href="#white-roads" stroke="#c3c1b8" stroke-width="6" stroke-linejoin="round"/>
<use href="#white-roads" stroke="#fff" stroke-width="4" stroke-linejoin="round"/>
<use href="#yellow-roads" stroke="#cfcf86" stroke-width="8" stroke-linejoin="round"/>
<use href="#yellow-roads" stroke="#f6f8b8" stroke-width="5" stroke-linejoin="round"/>
<use href="#railways" stroke="#757575" stroke-width="5"/>
<use href="#railways" stroke="#e8e8e4" stroke-width="2" stroke-dasharray="16 14"/>
<use href="#orange-roads" stroke="#dda960" stroke-width="8" stroke-linejoin="round"/>
<use href="#orange-roads" stroke="#fbd29f" stroke-width="5" stroke-linejoin="round"/>
<use href="#motorway" stroke="#d97a8c" stroke-width="9"/>
<use href="#motorway" stroke="#e892a2" stroke-width="6"/>

<g fill="#7b83b8"><path d="M1609 1020h7v7h-7zM1607 1034h7v7h-7zM1690 1052h7v7h-7zM1952 594h8v8h-8z"/></g>
<g fill="none" stroke="#777" stroke-width="3"><path d="M1353 430L1376 416M1327 1722L1337 1732 1338 1755"/><path d="M1373 412L1379 420M1319 1719L1325 1717 1333 1706" stroke="#222" stroke-width="4"/></g>

<!-- symbols -->
<g>
  <use href="#peak" x="1218" y="162"/><use href="#peak" x="1260" y="176"/><use href="#peak" x="1662" y="288"/><use href="#peak" x="1694" y="402"/><use href="#peak" x="1464" y="558"/><use href="#peak" x="2118" y="266"/><use href="#peak" x="1980" y="344"/><use href="#peak" x="1614" y="834"/><use href="#peak" x="1984" y="666"/><use href="#peak" x="1936" y="762"/><use href="#peak" x="2082" y="846"/><use href="#peak" x="1866" y="890"/><use href="#peak" x="1924" y="1092"/><use href="#peak" x="1564" y="1242"/><use href="#peak" x="1558" y="1380"/><use href="#peak" x="1438" y="1422"/><use href="#peak" x="1578" y="1466"/><use href="#peak" x="1758" y="1488"/><use href="#peak" x="1576" y="1808"/><use href="#peak" x="1672" y="1916"/><use href="#peak" x="1706" y="1974"/><use href="#peak" x="1642" y="2030"/><use href="#peak" x="1450" y="1971"/><use href="#peak" x="1770" y="2042"/>
  <use href="#plane" transform="translate(1880 606) scale(1.200)"/><use href="#plane" transform="translate(1744 626) scale(1.200)"/><use href="#plane" transform="translate(1316 920) scale(1.200)"/>
</g>
<rect x="1835" y="353" width="54" height="34" rx="4" fill="#edf0d5" stroke="#c6c68c" stroke-width="2"/>
<rect x="2075" y="1129" width="43" height="34" rx="4" fill="#eccdd3" stroke="#d99aa8" stroke-width="2"/>

<!-- place names -->
<g font-family="'Noto Sans', sans-serif" font-size="20" font-weight="500" fill="#444" stroke="#fff" stroke-opacity=".75" stroke-width="4" stroke-linejoin="round" paint-order="stroke" text-anchor="middle">
  <text x="2032" y="131">Stráne pod</text><text x="2032" y="155">Tatrami</text>
  <text x="1253" y="344" text-anchor="end" font-size="25">Tatry</text>
  <text x="1669" y="367">Stará Lesná</text><text x="1361" y="477">Nová Lesná</text><text x="2092" y="357" text-anchor="start">Malý</text>
  <text x="1982" y="541">Veľká Lomnica</text><text x="1718" y="673">Mlynica</text><text x="1535" y="746">Veľký Slavkov</text>
  <text x="1797" y="852">Matejovce</text><text x="1532" y="977">Veľká</text><text x="1728" y="991">Spišská Sobota</text>
  <text x="1783" y="1060">Stráže pod</text><text x="1783" y="1088">Tatrami</text>
  <text x="1624" y="1095" font-size="25">Poprad</text><text x="1359" y="1154">Spišská Teplica</text>
  <text x="1899" y="1283">Hozelec</text><text x="1785" y="1310">Gánovce</text><text x="1982" y="1341">Švábovce</text>
  <text x="1987" y="1617">Spišský Štiavnik</text><text x="1304" y="1650">Spišské Bystré</text><text x="1693" y="1682">Hranovnica</text>
  <text x="1929" y="2018">Píla</text><text x="2126" y="1754" text-anchor="start">B</text>
  <g fill="#c0394b" font-size="19" font-weight="600" font-style="italic"><text x="1298" y="996">322</text><text x="1350" y="998">323</text><text x="1495" y="924">325</text><text x="1788" y="935">328</text></g>
</g>
<g font-family="'Noto Sans', sans-serif" font-size="20" font-weight="500" text-anchor="middle"><text x="1862" y="377" fill="#63632c">540</text><text x="2096" y="1153" fill="#8d4356" font-weight="600">D1</text></g>

<!-- road segments of the scenario -->
<g fill="none" stroke="#0a0a0a" stroke-linejoin="round">
  <g transform="translate(1200 620) scale(.33333 .3954)">
    <path stroke-width="4" d="M657 915L690 895 760 855 880 750Q960 690 1070 683C1140 680 1190 696 1250 694S1400 682 1450 685C1580 690 1650 750 1750 775L1870 798M1205 1165L1200 1250 1183 1318M1862 635Q1830 710 1790 760L1700 890"/>
    <path stroke-width="3" d="M735 517L800 635 870 710 890 740Q890 800 840 840T770 960L775 1020 808 1078M865 710L850 780M1035 570L1080 645Q1075 700 1020 755L1000 800Q960 840 965 885L1045 940 1120 1070 1165 1145 1200 1165M727 885L860 932 915 915 1045 940M735 1040Q840 1020 850 1110L780 1075ZM850 1110L950 1200Q1010 1240 1090 1250L1200 1243 1320 1260 1450 1268 1570 1300M1200 1168L1330 1120 1450 1085Q1500 1060 1560 1020L1650 950 1700 890M705 1070L745 1105 742 1145 725 1163M1478 1070L1530 1130 1630 1126 1700 1138 1755 1128M1205 1190L1235 1242M1150 1245L1190 1275M1165 1258L1220 1215"/>
    <path stroke-width="3" d="M1720 768Q1780 740 1810 765L1780 815Q1820 820 1850 798M885 755Q900 735 915 755 905 770 885 755"/>
  </g>
</g>
<path d="M1874 948L1774 1147" fill="none" stroke="#3388ff" stroke-width="6" stroke-linecap="round"/>
</svg>

  <div class="absolute right-[20px] bottom-[68px] flex flex-col gap-[16px]">
    <button type="button" aria-label="Zoom in" class="flex size-[80px] items-center justify-center rounded-full bg-[#e0e0e0] shadow-[0_6px_14px_rgba(0,0,0,0.3)]"><svg class="size-[24px]" viewBox="0 0 24 24"><path d="M12 0V24M0 12H24" stroke="#212121" stroke-width="3"/></svg></button>
    <button type="button" aria-label="Zoom out" class="flex size-[80px] items-center justify-center rounded-full bg-[#e0e0e0] shadow-[0_6px_14px_rgba(0,0,0,0.3)]"><svg class="size-[24px]" viewBox="0 0 24 24"><path d="M0 12H24" stroke="#212121" stroke-width="3"/></svg></button>
  </div>
  <div class="absolute bottom-[10px] left-[10px] flex flex-col items-start gap-[20px] text-[22px]">
    <div class="h-[38px] w-[294px] border-l-4 border-[#777] bg-white/50 pl-[10px] leading-[41px] whitespace-nowrap">LatLon: 49.04754 20.32127</div>
    <div class="h-[34px] w-[160px] border-4 border-t-0 border-[#777] bg-white/50 pl-[10px] leading-[33px] text-[#333]">2 km</div>
  </div>
  <p class="absolute right-0 bottom-0 bg-white/70 px-[10px] text-[22px] leading-[32px] whitespace-nowrap text-[#333]"><a href="#" class="text-[#0078a8]">Leaflet</a> | ©<a href="#" class="text-[#0078a8]">OpenStreetMap</a> contributors</p>
</main>

<!-- Segment form -->
<form class="px-[48px] pt-[60px]">
  <h2 class="text-[36px] leading-[40px]">Add segment</h2>
  <h3 class="mt-[63px] leading-[36px]">Traffic count</h3>
  <p class="mt-[6px] leading-[36px] text-[#757575]">Time factor type: yearly total</p>
  <div class="mt-[49px] flex flex-col gap-[68px]">
    <div class="relative h-[108px]">
      <label for="bus" class="absolute top-[-13px] left-[18px] bg-[#f7f7f7] px-[10px] text-[21px] leading-[24px]">Bus</label>
      <input id="bus" value="17263" class="size-full rounded-[2px] border-2 border-[#bdbdbd] px-[26px] text-[#212121]">
    </div>
    <div class="relative h-[107px]">
      <label for="car" class="absolute top-[-13px] left-[18px] bg-[#f7f7f7] px-[10px] text-[21px] leading-[24px]">Car</label>
      <input id="car" value="6000000" class="size-full rounded-[2px] border-2 border-[#bdbdbd] px-[26px] text-[#212121]">
    </div>
    <div class="relative h-[108px]">
      <label for="hdv" class="absolute top-[-13px] left-[18px] bg-[#f7f7f7] px-[10px] text-[21px] leading-[24px]">High duty vehicle</label>
      <input id="hdv" value="5000000" class="size-full rounded-[2px] border-2 border-[#bdbdbd] px-[26px] text-[#212121]">
    </div>
    <div class="relative h-[107px]">
      <label for="ldv" class="absolute top-[-13px] left-[18px] bg-[#f7f7f7] px-[10px] text-[21px] leading-[24px]">Low duty vehicle</label>
      <input id="ldv" value="4000000" class="size-full rounded-[2px] border-2 border-[#bdbdbd] px-[26px] text-[#212121]">
    </div>
  </div>
  <h3 class="mt-[70px] leading-[36px]">Segment properties</h3>
  <div class="mt-[51px] flex flex-col gap-[68px]">
    <div class="relative flex h-[107px] items-center rounded-[2px] border-2 border-[#bdbdbd] px-[26px]">
      <label for="speed" class="absolute top-[-15px] left-[16px] bg-[#f7f7f7] px-[10px] text-[21px] leading-[24px]">Speed limit</label>
      <input id="speed" value="100" class="min-w-0 grow text-[#212121]"><span class="text-[#757575]">km/h</span>
    </div>
    <div class="relative flex h-[107px] items-center rounded-[2px] border-2 border-[#bdbdbd] px-[26px]">
      <label for="height" class="absolute top-[-15px] left-[16px] bg-[#f7f7f7] px-[10px] text-[21px] leading-[24px]">Height</label>
      <input id="height" value="0" class="min-w-0 grow text-[#212121]"><span class="text-[#757575]">m</span>
    </div>
    <div class="relative flex h-[107px] items-center rounded-[2px] border-2 border-[#bdbdbd] px-[26px]">
      <label for="road" class="absolute top-[-15px] left-[16px] bg-[#f7f7f7] px-[10px] text-[21px] leading-[24px]">Road type</label>
      <select id="road" class="min-w-0 grow appearance-none bg-transparent text-[#212121]"><option>Highway</option></select>
      <svg class="h-[10px] w-[20px] fill-[#757575]" viewBox="0 0 20 10"><path d="M0 0H20L10 10Z"/></svg>
    </div>
  </div>
  <div class="mt-[67px] flex items-center justify-end gap-[32px] pb-[48px] text-[26px]">
    <button type="button" class="text-[#212121]">CANCEL</button>
    <button type="submit" class="h-[68px] w-[148px] rounded-full bg-linear-[110deg] from-[#33a6de] to-[#557ace] text-white shadow-[0_6px_10px_rgba(0,0,0,0.2)]">SAVE</button>
  </div>
</form>
</body>
</html>
